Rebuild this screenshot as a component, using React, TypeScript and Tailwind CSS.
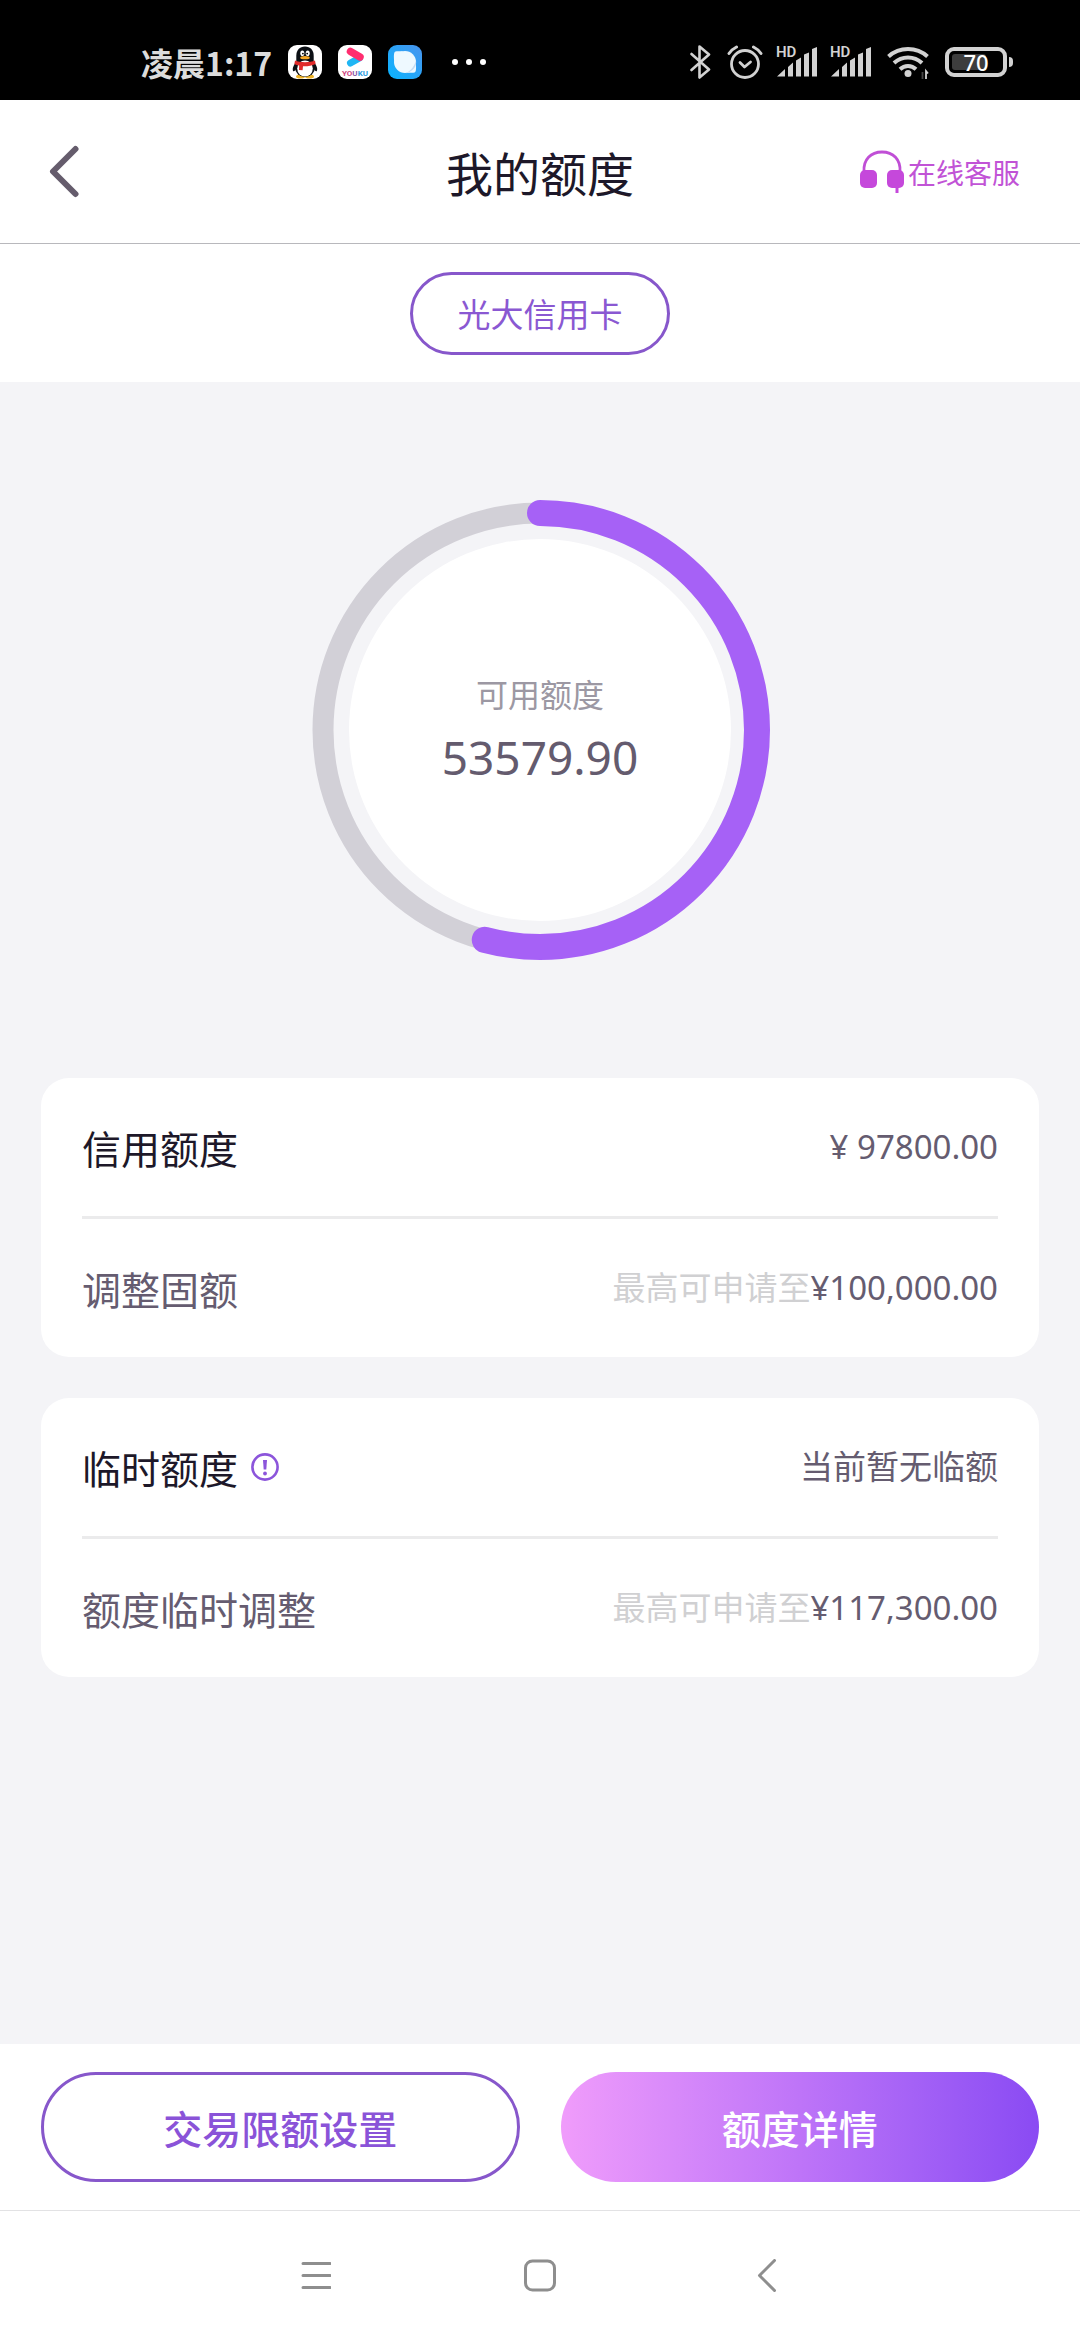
import type { ReactNode } from "react";

const CREDIT_FONT = "font-['Noto_Sans','Noto_Sans_CJK_SC',sans-serif]";

function QQIcon() {
  return (
    <svg width="34" height="34" viewBox="0 0 34 34" aria-hidden="true">
      <rect width="34" height="34" rx="9" fill="#fff" />
      <ellipse cx="12.5" cy="31.5" rx="4.5" ry="2" fill="#f0b429" />
      <ellipse cx="21.5" cy="31.5" rx="4.5" ry="2" fill="#f0b429" />
      <path d="M8 17c-2.500 3-4 7-2.800 9.200 1 .6 2.200-1 3-2.200zM26 17c2.500 3 4 7 2.800 9.200-1 .6-2.200-1-3-2.200z" fill="#0b0f14" />
      <ellipse cx="17" cy="22.500" rx="10" ry="9.500" fill="#0b0f14" />
      <path d="M17 1.500c-5.400 0-8.700 3.800-8.700 9.200V17h17.400v-6.300c0-5.400-3.300-9.200-8.700-9.200z" fill="#0b0f14" />
      <ellipse cx="17" cy="23.500" rx="7.800" ry="8" fill="#fff" />
      <path d="M7 15.500c5 2.200 15 2.200 20 0l.6 3.500c-4 2-9 2.400-12.600 2.200l-.4 4-3.600-.2.200-4.500c-2-.4-3.600-1-4.800-1.600z" fill="#e02b2b" />
      <ellipse cx="14.300" cy="8.300" rx="2" ry="2.800" fill="#fff" />
      <ellipse cx="19.700" cy="8.300" rx="2" ry="2.800" fill="#fff" />
      <circle cx="14.900" cy="8.600" r=".9" fill="#000" />
      <circle cx="19.200" cy="8.600" r=".9" fill="#000" />
      <ellipse cx="17" cy="12.700" rx="4.800" ry="1.600" fill="#f5a623" />
    </svg>
  );
}

function YoukuIcon() {
  return (
    <svg width="34" height="34" viewBox="0 0 34 34" aria-hidden="true">
      <rect width="34" height="34" rx="9" fill="#fff" />
      <path d="M21.500 13 12.500 18" stroke="#1fb6f4" strokeWidth="7" strokeLinecap="round" />
      <path d="M12.500 6.500 22 12" stroke="#ff2d6f" strokeWidth="7.500" strokeLinecap="round" />
      <text x="17" y="31" textAnchor="middle" fontSize="8" fontWeight="700" fontFamily="Roboto, sans-serif" fill="#d0457f">
        YO<tspan fill="#8a5aa8">U</tspan><tspan fill="#2c9be0">KU</tspan>
      </text>
    </svg>
  );
}

function BrowserIcon() {
  return (
    <svg width="34" height="34" viewBox="0 0 34 34" aria-hidden="true">
      <defs>
        <linearGradient id="browserBg" x1="1" y1="0" x2="0" y2="1">
          <stop offset="0" stopColor="#4a94ee" />
          <stop offset="1" stopColor="#08b4ff" />
        </linearGradient>
      </defs>
      <rect width="34" height="34" rx="9" fill="url(#browserBg)" />
      <circle cx="17" cy="17" r="11" fill="#eef9ff" />
      <path d="M6.200 16C5.600 10 6 6.800 7.500 6.500S11 6.500 15 6.200zM27.800 18c.6 6 .2 9.200-1.300 9.500s-3.500 0-7.500.3z" fill="#eef9ff" />
      <path d="M28 15.500c1 6-3 11-10 12.700 5.500-3.200 8.500-7.200 10-12.700z" fill="#c3dcf4" />
    </svg>
  );
}

function BluetoothIcon() {
  return (
    <svg width="21" height="34" viewBox="0 0 21 34" fill="none" stroke="#d2d2d2" strokeWidth="2.600" strokeLinejoin="round" strokeLinecap="round" aria-hidden="true">
      <path d="M1.500 9 19 24.500l-9.500 8V1.500l9.500 8L1.500 25" />
    </svg>
  );
}

function AlarmIcon() {
  return (
    <svg width="36" height="34" viewBox="0 0 36 34" fill="none" stroke="#d2d2d2" strokeWidth="2.800" strokeLinecap="round" strokeLinejoin="round" aria-hidden="true">
      <circle cx="18" cy="19" r="13.500" />
      <path d="M13 17.500l4.500 4.500 6-5" />
      <path d="M2 8.500c2-3 4.500-5 7.500-6.500M34 8.500c-2-3-4.500-5-7.500-6.500" strokeWidth="3" />
    </svg>
  );
}

function SignalIcon() {
  return (
    <svg width="41" height="34" viewBox="0 0 41 34" fill="#d2d2d2" className="overflow-visible" aria-hidden="true">
      <text x="0" y="12" fontSize="15" fontWeight="600" fontFamily="Roboto, sans-serif">
        HD
      </text>
      <path d="M1 31.500l8-7.500v7.500zM12 31.500V22l5-4.500v14zM20 31.500V15.500l5-3v19zM28 31.500V9.500l5-2v24zM36 31.500V4l5-2v29.500z" />
    </svg>
  );
}

function WifiIcon() {
  return (
    <svg width="42" height="34" viewBox="0 0 42 34" fill="none" stroke="#d2d2d2" strokeWidth="4" aria-hidden="true">
      <path d="M1.500 11.500C12.500 1.500 29.500 1.500 40.500 11.500" />
      <path d="M7 18c8-7.500 20-7.500 28 0" />
      <path d="M13 24.200c4.500-4.300 11.500-4.300 16 0" />
      <circle cx="21" cy="28.500" r="3.500" fill="#d2d2d2" stroke="none" />
      <path d="M35.500 27v7" stroke="#444" strokeWidth="1.800" />
      <path d="M39 34v-8l2 2.500" strokeWidth="1.800" />
    </svg>
  );
}

function Battery({ level }: { level: number }) {
  return (
    <div className="flex items-center gap-0.5" role="img" aria-label={`电量 ${level}%`}>
      <div className="relative flex h-[30px] w-[62px] items-center justify-center rounded-[9px] border-4 border-[#d2d2d2]">
        <div className="absolute inset-y-[3px] left-[3px] w-[34px] rounded-[3px] bg-[#3d3d3d]" />
        <span className="relative font-['Noto_Sans',sans-serif] text-[22px] leading-[22px] font-medium text-white">{level}</span>
      </div>
      <div className="h-2.5 w-1 rounded-r-sm bg-[#d2d2d2]" />
    </div>
  );
}

function StatusBar() {
  return (
    <div className="flex h-[100px] items-center justify-between bg-black pt-6 pr-[67px] pl-[141px] text-[#dcdcdc]">
      <div className="flex items-center gap-4">
        <span className="font-['Noto_Sans_CJK_SC',sans-serif] text-[32px] leading-10 font-bold">凌晨1:17</span>
        <QQIcon />
        <YoukuIcon />
        <BrowserIcon />
        <div className="flex gap-2 pl-[14px]">
          <i className="size-1.5 rounded-full bg-white" />
          <i className="size-1.5 rounded-full bg-white" />
          <i className="size-1.5 rounded-full bg-white" />
        </div>
      </div>
      <div className="flex items-center gap-4">
        <BluetoothIcon />
        <div className="flex gap-[13px]">
          <AlarmIcon />
          <SignalIcon />
          <SignalIcon />
        </div>
        <WifiIcon />
        <Battery level={70} />
      </div>
    </div>
  );
}

function HeadsetIcon() {
  return (
    <svg width="44" height="44" viewBox="0 0 44 44" aria-hidden="true">
      <path d="M4 22C3 9.500 11 2 22 2s19 7.500 18 20" fill="none" stroke="#c04fd6" strokeWidth="2.800" />
      <rect x="0" y="20" width="17" height="18" rx="5" fill="#c548db" />
      <rect x="27" y="20" width="17" height="18" rx="5" fill="#c548db" />
      <path d="M37 36v7" stroke="#c548db" strokeWidth="3" />
    </svg>
  );
}

function Header() {
  return (
    <header className="grid h-36 grid-cols-[1fr_auto_1fr] items-center border-b border-[#b8b8bc] bg-white px-12">
      <button type="button" aria-label="返回" className="justify-self-start">
        <svg width="32" height="54" viewBox="0 0 32 54" fill="none" stroke="#655c6c" strokeWidth="6" strokeLinecap="round" strokeLinejoin="round" aria-hidden="true">
          <path d="M27.500 4 5 26.500l22.500 22.500" />
        </svg>
      </button>
      <h1 className="text-[47px] leading-[60px] font-normal text-[#1d1829]">我的额度</h1>
      <button type="button" className="flex items-center gap-1 justify-self-end pr-3 text-[28px] leading-10 text-[#c153d6]">
        <HeadsetIcon />
        在线客服
      </button>
    </header>
  );
}

function LimitRing({ label, amount, percent }: { label: string; amount: string; percent: number }) {
  return (
    <div className="relative size-[460px]">
      <svg viewBox="0 0 460 460" className="size-full" fill="none" aria-hidden="true">
        <circle cx="230" cy="230" r="191" fill="#fff" />
        <circle cx="230" cy="230" r="217" stroke="#d2d0d7" strokeWidth="21" />
        <circle
          cx="230"
          cy="230"
          r="217"
          stroke="#a661f6"
          strokeWidth="26"
          strokeLinecap="round"
          pathLength={100}
          strokeDasharray={`${percent} 100`}
          transform="rotate(-90 230 230)"
        />
      </svg>
      <div className="absolute inset-0 flex flex-col items-center justify-center gap-1 pb-2.5">
        <span className="text-[32px] leading-[60px] text-[#9c98a3]">{label}</span>
        <span className={`${CREDIT_FONT} text-[46px] leading-[60px] text-[#645b6e]`}>{amount}</span>
      </div>
    </div>
  );
}

function Card({ children }: { children: ReactNode }) {
  return <section className="divide-y-[3px] divide-[#ebebec] rounded-[28px] bg-white px-[41px]">{children}</section>;
}

function InfoRow({ label, value, info }: { label: string; value: string; info?: boolean }) {
  return (
    <div className="flex h-[141px] items-center justify-between text-[33px] leading-10 text-[#655c70]">
      <div className="flex items-center gap-[13px]">
        <span className="text-[39px] leading-[56px] text-[#1d1829]">{label}</span>
        {info && (
          <button type="button" aria-label="临时额度说明">
            <svg width="28" height="28" viewBox="0 0 28 28" aria-hidden="true">
              <circle cx="14" cy="14" r="12.600" fill="none" stroke="#8c55db" strokeWidth="2.600" />
              <path d="M12 7h4l-.7 9.500h-2.600z" fill="#8c55db" />
              <circle cx="14" cy="20.500" r="1.900" fill="#8c55db" />
            </svg>
          </button>
        )}
      </div>
      <span className={CREDIT_FONT}>{value}</span>
    </div>
  );
}

function ActionRow({ label, amount }: { label: string; amount: string }) {
  return (
    <button type="button" className="flex h-[138px] w-full items-center justify-between text-[33px] leading-10 text-[#655c70]">
      <span className="text-[39px] leading-[56px]">{label}</span>
      <span className={CREDIT_FONT}>
        <span className="text-[#d0d0d2]">最高可申请至</span>
        {amount}
      </span>
    </button>
  );
}

function SystemNav() {
  return (
    <nav aria-label="系统导航" className="flex h-[130px] items-center justify-center border-t border-[#e2e2e4] bg-white">
      <button type="button" aria-label="最近任务" className="flex w-[225px] justify-center">
        <svg width="32" height="34" viewBox="0 0 32 34" stroke="#8e8e8e" strokeWidth="3" strokeLinecap="round" aria-hidden="true">
          <path d="M4 4.500h27M4 16.500h27M4 28.500h27" />
        </svg>
      </button>
      <button type="button" aria-label="主屏幕" className="flex w-[225px] justify-center">
        <svg width="34" height="34" viewBox="0 0 34 34" fill="none" stroke="#8e8e8e" strokeWidth="3" aria-hidden="true">
          <rect x="2.500" y="2" width="29" height="29" rx="7" />
        </svg>
      </button>
      <button type="button" aria-label="返回上一页" className="flex w-[225px] justify-center">
        <svg width="24" height="34" viewBox="0 0 24 34" fill="none" stroke="#8e8e8e" strokeWidth="3" strokeLinecap="round" strokeLinejoin="round" aria-hidden="true">
          <path d="M21.500 1.500 6.500 16.500l15 15" />
        </svg>
      </button>
    </nav>
  );
}

export default function App() {
  return (
    <div className="flex min-h-screen flex-col bg-[#f4f4f7] font-['Noto_Sans_CJK_SC',sans-serif]">
      <StatusBar />
      <Header />
      <div className="flex h-[138px] items-center justify-center bg-white">
        <button type="button" className="h-[83px] w-[260px] rounded-full border-3 border-[#8757cb] text-[33px] leading-10 text-[#8a58d2]">
          光大信用卡
        </button>
      </div>
      <main className="flex flex-1 flex-col gap-[41px] px-[41px]">
        <div className="flex justify-center pt-[118px] pb-[77px]">
          <LimitRing label="可用额度" amount="53579.90" percent={54.1} />
        </div>
        <Card>
          <InfoRow label="信用额度" value="¥ 97800.00" />
          <ActionRow label="调整固额" amount="¥100,000.00" />
        </Card>
        <Card>
          <InfoRow label="临时额度" value="当前暂无临额" info />
          <ActionRow label="额度临时调整" amount="¥117,300.00" />
        </Card>
      </main>
      <footer className="grid h-[166px] grid-cols-2 items-center gap-[41px] bg-white px-[41px] text-[39px] leading-[60px] font-medium">
        <button type="button" className="h-[110px] rounded-full border-3 border-[#8757cb] text-[#8a53d8]">
          交易限额设置
        </button>
        <button type="button" className="h-[110px] rounded-full bg-linear-to-r from-[#f09cfb] via-[#be74f8] to-[#8a4af3] text-white">
          额度详情
        </button>
      </footer>
      <SystemNav />
    </div>
  );
}
